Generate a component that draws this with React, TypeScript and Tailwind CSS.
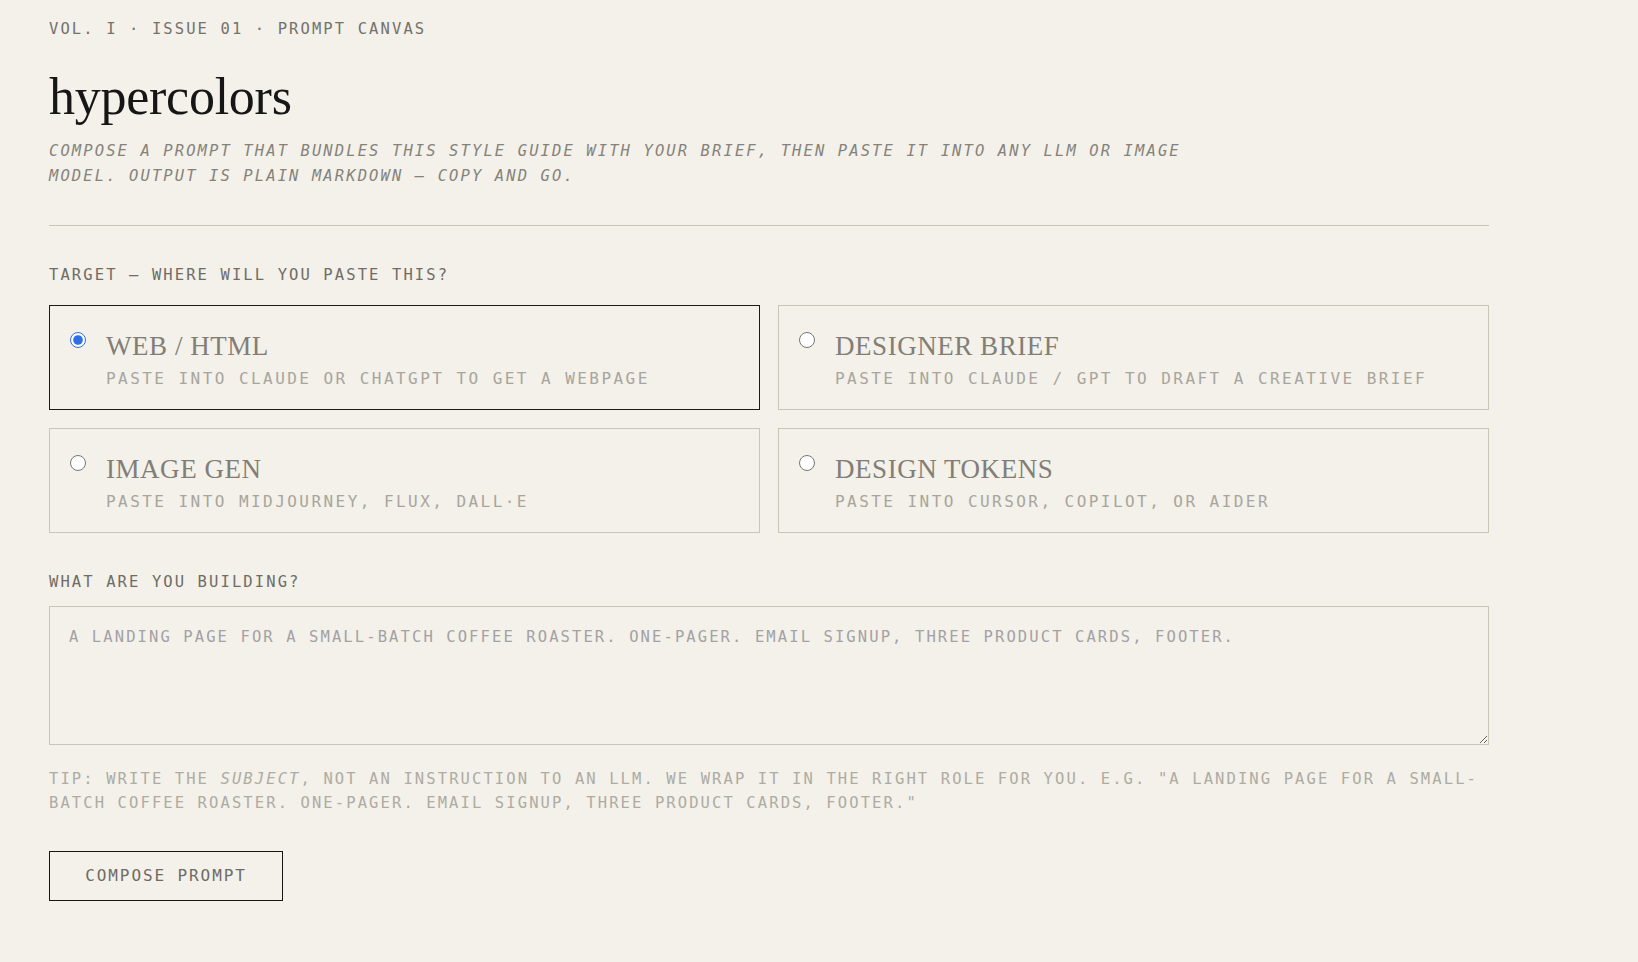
import React, { useState } from "react";

const MONO = "font-[family-name:'DejaVu_Sans_Mono',monospace]";
const SERIF = "font-[family-name:'Liberation_Serif',serif]";

type Target = {
  id: string;
  title: string;
  hint: string;
};

const TARGETS: Target[] = [
  { id: "web", title: "WEB / HTML", hint: "PASTE INTO CLAUDE OR CHATGPT TO GET A WEBPAGE" },
  { id: "brief", title: "DESIGNER BRIEF", hint: "PASTE INTO CLAUDE / GPT TO DRAFT A CREATIVE BRIEF" },
  { id: "image", title: "IMAGE GEN", hint: "PASTE INTO MIDJOURNEY, FLUX, DALL·E" },
  { id: "tokens", title: "DESIGN TOKENS", hint: "PASTE INTO CURSOR, COPILOT, OR AIDER" },
];

function TargetCard({
  target,
  selected,
  onSelect,
}: {
  target: Target;
  selected: boolean;
  onSelect: () => void;
}) {
  return (
    <label
      className={`flex h-[105px] cursor-pointer items-start gap-5 border bg-transparent pl-5 pt-[27px] ${
        selected ? "border-[#1b1b1b]" : "border-[#c9c6b4]"
      }`}
    >
      <input
        type="radio"
        name="target"
        checked={selected}
        onChange={onSelect}
        className="-mt-px h-4 w-4 shrink-0 accent-[#2f6fe6]"
      />
      <div className="flex flex-col">
        <span className={`${SERIF} text-[27px] leading-[27px] tracking-[0.02em] text-[#827e77]`}>
          {target.title}
        </span>
        <span className={`${MONO} mt-[9px] text-[16px] leading-5 tracking-[2.45px] text-[#a8a59d]`}>
          {target.hint}
        </span>
      </div>
    </label>
  );
}

export default function App() {
  const [target, setTarget] = useState("web");
  const [brief, setBrief] = useState("");

  return (
    <div className="min-h-screen w-full bg-[#f3f1e9]">
      <div className="w-[1538px] px-[49px] pt-[19px] pb-16">
        <div className={`${MONO} text-[15.5px] leading-5 tracking-[2.1px] text-[#75726c]`}>
          VOL. I · ISSUE 01 · PROMPT CANVAS
        </div>

        <h1 className={`${SERIF} mt-[32px] text-[52px] leading-[52px] font-normal tracking-[-0.005em] text-[#161616]`}>
          hypercolors
        </h1>

        <p
          className={`${MONO} mt-[16px] max-w-[1200px] text-[15.5px] italic leading-[25px] tracking-[2.1px] text-[#85827b]`}
        >
          COMPOSE A PROMPT THAT BUNDLES THIS STYLE GUIDE WITH YOUR BRIEF, THEN PASTE IT INTO ANY LLM OR IMAGE
          MODEL. OUTPUT IS PLAIN MARKDOWN — COPY AND GO.
        </p>

        <div className="mt-[36px] h-px w-full bg-[#c9c6b4]" />

        <div className={`${MONO} mt-[39px] text-[15.5px] leading-5 tracking-[2.1px] text-[#6f6c66]`}>
          TARGET — WHERE WILL YOU PASTE THIS?
        </div>

        <div className="mt-[20px] grid grid-cols-2 gap-[18px]">
          {TARGETS.map((t) => (
            <TargetCard
              key={t.id}
              target={t}
              selected={target === t.id}
              onSelect={() => setTarget(t.id)}
            />
          ))}
        </div>

        <div className={`${MONO} mt-[39px] text-[15.5px] leading-5 tracking-[2.1px] text-[#6f6c66]`}>
          WHAT ARE YOU BUILDING?
        </div>

        <textarea
          value={brief}
          onChange={(e) => setBrief(e.target.value)}
          placeholder="A LANDING PAGE FOR A SMALL-BATCH COFFEE ROASTER. ONE-PAGER. EMAIL SIGNUP, THREE PRODUCT CARDS, FOOTER."
          className={`${MONO} mt-[14px] block h-[139px] w-full border border-[#c9c6b4] bg-transparent px-[19px] py-[18px] text-[15.5px] leading-6 tracking-[2.1px] text-[#3a3935] outline-none placeholder:text-[#a3a1a5]`}
        />

        <p className={`${MONO} mt-[22px] text-[15.5px] leading-6 tracking-[2.1px] text-[#aeaba3]`}>
          TIP: WRITE THE <em className="italic">SUBJECT</em>, NOT AN INSTRUCTION TO AN LLM. WE WRAP IT IN THE RIGHT
          ROLE FOR YOU. E.G. "A LANDING PAGE FOR A SMALL-BATCH COFFEE ROASTER. ONE-PAGER. EMAIL SIGNUP, THREE
          PRODUCT CARDS, FOOTER."
        </p>

        <button
          type="button"
          className={`${MONO} mt-[36px] flex h-[50px] w-[234px] items-center justify-center border border-[#161616] bg-transparent text-[16px] tracking-[1.9px] text-[#6e6b65]`}
        >
          COMPOSE PROMPT
        </button>
      </div>
    </div>
  );
}
